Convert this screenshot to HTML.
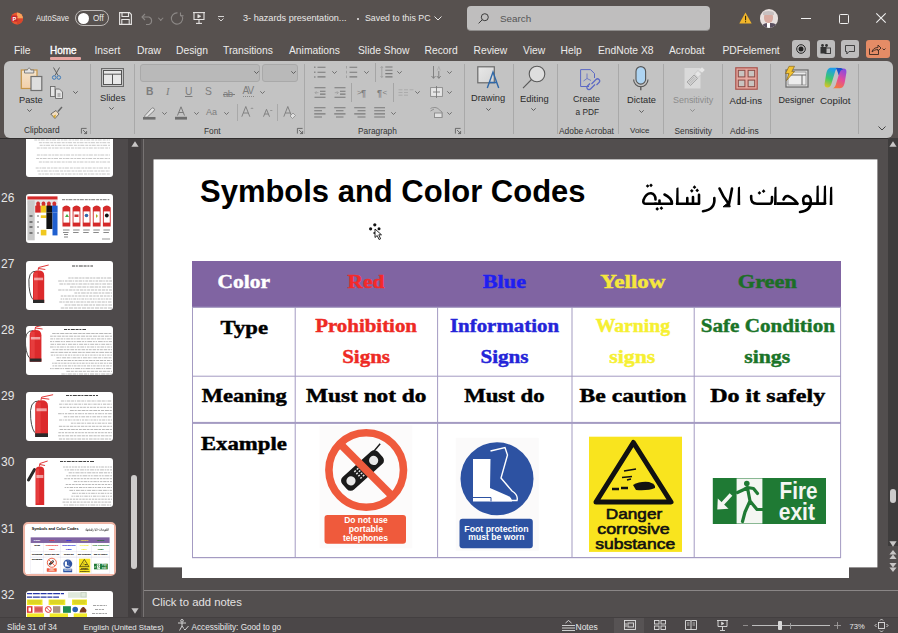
<!DOCTYPE html>
<html><head><meta charset="utf-8">
<style>
*{margin:0;padding:0;box-sizing:border-box}
html,body{width:898px;height:633px;overflow:hidden;background:#57514f;font-family:"Liberation Sans",sans-serif}
.a{position:absolute;white-space:nowrap;line-height:1}
svg{position:absolute;overflow:visible}
#titlebar{position:absolute;left:0;top:0;width:898px;height:61px;background:#57514f}
.tab{position:absolute;top:45.5px;font-size:10.3px;color:#ecebea;line-height:1;white-space:nowrap}
#ribbon{position:absolute;left:4px;top:61px;width:889px;height:77px;background:#c3c3c3;border-radius:6px}
.rl{position:absolute;white-space:nowrap;line-height:1;color:#2b2b2b;font-size:9px}
.gl{position:absolute;white-space:nowrap;line-height:1;color:#333;font-size:8.3px}
.sep{position:absolute;width:1px;background:#a9a9a9;top:64px;height:70px}
.chev{position:absolute;width:4px;height:4px;border-right:1px solid #555;border-bottom:1px solid #555;transform:rotate(45deg)}
#pane{position:absolute;left:0;top:138px;width:143px;height:479px;background:#4e4a4b}
#vscroll{position:absolute;left:128px;top:138px;width:12.5px;height:479px;background:#423e3f}
#vsep{position:absolute;left:143px;top:138px;width:1px;height:479px;background:#777373}
#main{position:absolute;left:144px;top:138px;width:754px;height:479px;background:#524e4e}
#status{position:absolute;left:0;top:617px;width:898px;height:16px;background:#4b4748;border-top:1px solid #433f40}
.thumb{position:absolute;left:25.8px;width:87.4px;height:49px;background:#fff;border-radius:3px;overflow:hidden}
.num{position:absolute;left:1px;color:#e6e6e6;font-size:12px;line-height:1}
.st{position:absolute;top:623.5px;font-size:8.2px;color:#e8e8e8;line-height:1;white-space:nowrap}
</style></head><body>
<div id="titlebar"></div>
<div id="pane"></div>
<div class="thumb" style="top:128px;height:49.4px"><svg width="88" height="50"><path d="M8.3 12.0 H84" stroke="#999" stroke-width="0.55" stroke-dasharray="3 0.8 2 0.6 4 1"/><path d="M12.9 14.7 H84" stroke="#999" stroke-width="0.55" stroke-dasharray="3 0.8 2 0.6 4 1"/><path d="M13.7 17.3 H84" stroke="#999" stroke-width="0.55" stroke-dasharray="3 0.8 2 0.6 4 1"/><path d="M10.8 20.0 H84" stroke="#999" stroke-width="0.55" stroke-dasharray="3 0.8 2 0.6 4 1"/><path d="M10.9 27.0 H84" stroke="#999" stroke-width="0.55" stroke-dasharray="3 0.8 2 0.6 4 1"/><path d="M10.2 30.5 H84" stroke="#999" stroke-width="0.55" stroke-dasharray="3 0.8 2 0.6 4 1"/><path d="M12.9 34.0 H84" stroke="#999" stroke-width="0.55" stroke-dasharray="3 0.8 2 0.6 4 1"/><path d="M9.7 40.0 H84" stroke="#999" stroke-width="0.55" stroke-dasharray="3 0.8 2 0.6 4 1"/><path d="M11.3 43.0 H84" stroke="#999" stroke-width="0.55" stroke-dasharray="3 0.8 2 0.6 4 1"/><path d="M12.4 46.0 H84" stroke="#999" stroke-width="0.55" stroke-dasharray="3 0.8 2 0.6 4 1"/></svg></div>
<div class="thumb" style="top:194.3px"><svg width="88" height="49"><rect x="1.4" y="2.4" width="30.1" height="3.3" fill="#d42a2a"/><rect x="1.4" y="5.7" width="30.1" height="5" fill="#e4e4e4"/><rect x="1.4" y="6.3" width="7.3" height="40" fill="#c8c8c8"/><rect x="10.3" y="7.6" width="3.6" height="7.2" rx="1.6" fill="#d03030"/><rect x="15.700000000000001" y="7.6" width="3.6" height="7.2" rx="1.6" fill="#d03030"/><rect x="21.1" y="7.6" width="3.6" height="7.2" rx="1.6" fill="#d03030"/><rect x="26.500000000000004" y="7.6" width="3.6" height="7.2" rx="1.6" fill="#d03030"/><rect x="9.2" y="11.6" width="5.6" height="7" fill="#d42a2a"/><rect x="14.799999999999999" y="11.6" width="5.6" height="7" fill="#f0c820"/><rect x="20.4" y="11.6" width="5.6" height="7" fill="#111"/><rect x="25.999999999999996" y="11.6" width="5.6" height="7" fill="#2060d0"/><rect x="14.8" y="21.3" width="5.6" height="2.7" fill="#f0c820"/><rect x="14.8" y="35.8" width="5.6" height="5.6" fill="#f0c820"/><rect x="20.4" y="18.6" width="6.1" height="16.4" fill="#111"/><rect x="26.5" y="18.6" width="5" height="22.8" fill="#2060d0"/><circle cx="12" cy="22" r="0.7" fill="#333"/><rect x="3.5" y="21" width="3" height="2" fill="#777"/><circle cx="12" cy="28" r="0.7" fill="#333"/><rect x="3.5" y="27" width="3" height="2" fill="#777"/><circle cx="12" cy="33" r="0.7" fill="#333"/><rect x="3.5" y="32" width="3" height="2" fill="#777"/><circle cx="12" cy="39" r="0.7" fill="#333"/><rect x="3.5" y="38" width="3" height="2" fill="#777"/><path d="M36.0 5.7 H83.3" stroke="#555" stroke-width="0.8" stroke-dasharray="3 0.8 2 0.6 4 1"/><path d="M36.5 13.5 Q40.4 9.5 44.3 13.5 V32.5 H36.5Z" fill="#d42a2a"/><rect x="37.4" y="17.4" width="6" height="11.2" fill="#fff"/><path d="M37.0 36 H43.5 M37.0 38.5 H42.5" stroke="#555" stroke-width="0.7"/><path d="M46.6 13.5 Q50.5 9.5 54.4 13.5 V32.5 H46.6Z" fill="#d42a2a"/><rect x="47.5" y="17.4" width="6" height="11.2" fill="#fff"/><path d="M47.1 36 H53.6 M47.1 38.5 H52.6" stroke="#555" stroke-width="0.7"/><path d="M56.7 13.5 Q60.6 9.5 64.5 13.5 V32.5 H56.7Z" fill="#d42a2a"/><rect x="57.6" y="17.4" width="6" height="11.2" fill="#fff"/><path d="M57.2 36 H63.7 M57.2 38.5 H62.7" stroke="#555" stroke-width="0.7"/><path d="M66.8 13.5 Q70.7 9.5 74.6 13.5 V32.5 H66.8Z" fill="#d42a2a"/><rect x="67.7" y="17.4" width="6" height="11.2" fill="#fff"/><path d="M67.3 36 H73.8 M67.3 38.5 H72.8" stroke="#555" stroke-width="0.7"/><path d="M76.9 13.5 Q80.80000000000001 9.5 84.7 13.5 V32.5 H76.9Z" fill="#d42a2a"/><rect x="77.80000000000001" y="17.4" width="6" height="11.2" fill="#fff"/><path d="M77.4 36 H83.9 M77.4 38.5 H82.9" stroke="#555" stroke-width="0.7"/><path d="M41 20 L43 23 H39Z" fill="#4a4"/><rect x="48.5" y="20.5" width="4" height="2.5" fill="#c33"/><circle cx="60.5" cy="21.5" r="1.8" fill="#36a"/><path d="M70 20 L72 22 L70 24Z" fill="#aa2"/><circle cx="80.8" cy="21.5" r="1.9" fill="#111"/><path d="M38 40.5 H42 M38 43 H42" stroke="#555" stroke-width="0.7"/><rect x="76" y="44" width="8" height="2" fill="#ccc"/></svg></div>
<div class="thumb" style="top:260.6px"><svg width="88" height="49"><path d="M10.36 10.15 Q1.4000000000000004 9.5 3.0800000000000005 25.75 Q4.2 37.125 8.12 39.400000000000006" stroke="#333" stroke-width="0.9" fill="none"/><path d="M7 14.54 Q7 9.5 12.6 9.5 Q18.2 9.5 18.2 14.54 V42 H7 Z" fill="#dc2a2c"/><rect x="7.896" y="11.45" width="3.9199999999999995" height="29.25" fill="#f05050" opacity="0.5"/><rect x="7" y="38.75" width="11.2" height="3.25" fill="#2a2a2a"/><path d="M12.04 9.5 L12.6 6.5 L22.68 4.0 M12.6 7.5 L19.32 8.5" stroke="#d22" stroke-width="0.9" fill="none"/><rect x="8.12" y="16.65" width="8.959999999999999" height="2.6" fill="#fff" opacity="0.55"/><path d="M46 5 H67" stroke="#444" stroke-width="1" stroke-dasharray="3 0.8 2 1 4 0.8"/><path d="M42.3 17.0 H86" stroke="#8a8a8a" stroke-width="0.6" stroke-dasharray="2.4 0.7 2.2 0.9 3.9 0.8"/><path d="M32.2 20.0 H86" stroke="#8a8a8a" stroke-width="0.6" stroke-dasharray="3.6 0.7 1.5 0.9 2.7 0.8"/><path d="M33.4 23.0 H86" stroke="#8a8a8a" stroke-width="0.6" stroke-dasharray="3.6 0.7 2.0 0.9 3.9 0.8"/><path d="M44.0 26.0 H86" stroke="#8a8a8a" stroke-width="0.6" stroke-dasharray="3.7 0.7 2.0 0.9 4.2 0.8"/><path d="M32.2 29.0 H86" stroke="#8a8a8a" stroke-width="0.6" stroke-dasharray="3.4 0.7 2.2 0.9 2.9 0.8"/><path d="M48.4 32.0 H86" stroke="#8a8a8a" stroke-width="0.6" stroke-dasharray="2.7 0.7 2.4 0.9 4.6 0.8"/><path d="M34.8 35.0 H86" stroke="#8a8a8a" stroke-width="0.6" stroke-dasharray="2.5 0.7 2.6 0.9 3.3 0.8"/><path d="M34.6 38.0 H86" stroke="#8a8a8a" stroke-width="0.6" stroke-dasharray="1.7 0.7 1.3 0.9 2.7 0.8"/><path d="M33.3 41.0 H86" stroke="#8a8a8a" stroke-width="0.6" stroke-dasharray="3.1 0.7 1.6 0.9 3.5 0.8"/><path d="M38.6 44.0 H86" stroke="#8a8a8a" stroke-width="0.6" stroke-dasharray="3.0 0.7 2.2 0.9 4.7 0.8"/><path d="M34.8 47.0 H86" stroke="#8a8a8a" stroke-width="0.6" stroke-dasharray="3.6 0.7 3.0 0.9 4.0 0.8"/></svg></div>
<div class="thumb" style="top:326.1px"><svg width="88" height="49"><path d="M7.21 4.634 Q-2.1499999999999995 4 -0.3949999999999996 19.85 Q0.7750000000000004 30.945 4.87 33.164" stroke="#333" stroke-width="0.9" fill="none"/><path d="M3.7 9.265 Q3.7 4 9.55 4 Q15.4 4 15.4 9.265 V35.7 H3.7 Z" fill="#dc2a2c"/><rect x="4.636" y="5.902" width="4.095" height="28.530000000000005" fill="#f05050" opacity="0.5"/><rect x="3.7" y="32.53" width="11.7" height="3.1700000000000004" fill="#2a2a2a"/><path d="M8.965 4 L9.55 1 L20.08 -1.5 M9.55 2 L16.57 3" stroke="#d22" stroke-width="0.9" fill="none"/><rect x="4.87" y="10.974" width="9.36" height="2.5360000000000005" fill="#fff" opacity="0.55"/><path d="M38 3.5 H60" stroke="#444" stroke-width="1" stroke-dasharray="3 0.8 2 1 4 0.8"/><path d="M26.2 7.5 H86" stroke="#8a8a8a" stroke-width="0.6" stroke-dasharray="3.5 0.7 2.9 0.9 4.2 0.8"/><path d="M24.1 10.2 H86" stroke="#8a8a8a" stroke-width="0.6" stroke-dasharray="2.7 0.7 2.9 0.9 3.9 0.8"/><path d="M24.3 12.9 H86" stroke="#8a8a8a" stroke-width="0.6" stroke-dasharray="2.7 0.7 1.5 0.9 3.6 0.8"/><path d="M24.0 15.6 H86" stroke="#8a8a8a" stroke-width="0.6" stroke-dasharray="2.0 0.7 1.6 0.9 4.7 0.8"/><path d="M24.5 18.3 H86" stroke="#8a8a8a" stroke-width="0.6" stroke-dasharray="3.5 0.7 1.3 0.9 3.9 0.8"/><path d="M24.0 21.0 H86" stroke="#8a8a8a" stroke-width="0.6" stroke-dasharray="3.7 0.7 1.4 0.9 2.6 0.8"/><path d="M26.6 23.7 H86" stroke="#8a8a8a" stroke-width="0.6" stroke-dasharray="2.2 0.7 2.9 0.9 3.6 0.8"/><path d="M24.6 26.4 H86" stroke="#8a8a8a" stroke-width="0.6" stroke-dasharray="3.9 0.7 2.4 0.9 4.9 0.8"/><path d="M24.9 29.1 H86" stroke="#8a8a8a" stroke-width="0.6" stroke-dasharray="2.4 0.7 1.3 0.9 2.4 0.8"/><path d="M30.5 31.8 H86" stroke="#8a8a8a" stroke-width="0.6" stroke-dasharray="3.0 0.7 1.0 0.9 4.0 0.8"/><path d="M30.7 34.5 H86" stroke="#8a8a8a" stroke-width="0.6" stroke-dasharray="3.5 0.7 2.0 0.9 2.9 0.8"/><path d="M26.1 37.2 H86" stroke="#8a8a8a" stroke-width="0.6" stroke-dasharray="1.6 0.7 3.0 0.9 2.1 0.8"/><path d="M26.5 39.9 H86" stroke="#8a8a8a" stroke-width="0.6" stroke-dasharray="1.5 0.7 2.6 0.9 3.1 0.8"/><path d="M24.0 42.6 H86" stroke="#8a8a8a" stroke-width="0.6" stroke-dasharray="1.6 0.7 1.4 0.9 4.9 0.8"/><path d="M40.4 45.3 H86" stroke="#8a8a8a" stroke-width="0.6" stroke-dasharray="3.8 0.7 2.9 0.9 3.0 0.8"/><path d="M35.4 48.0 H86" stroke="#8a8a8a" stroke-width="0.6" stroke-dasharray="3.4 0.7 1.2 0.9 4.2 0.8"/></svg></div>
<div class="thumb" style="top:392.4px"><svg width="88" height="49"><path d="M13.04 8.936 Q2.799999999999999 8.2 4.72 26.599999999999998 Q5.999999999999999 39.48 10.48 42.056" stroke="#333" stroke-width="0.9" fill="none"/><path d="M9.2 13.96 Q9.2 8.2 15.6 8.2 Q22 8.2 22 13.96 V45 H9.2 Z" fill="#dc2a2c"/><rect x="10.224" y="10.408" width="4.4799999999999995" height="33.12" fill="#f05050" opacity="0.5"/><rect x="9.2" y="41.32" width="12.8" height="3.6799999999999997" fill="#2a2a2a"/><path d="M14.96 8.2 L15.6 5.199999999999999 L27.119999999999997 2.6999999999999993 M15.6 6.199999999999999 L23.28 7.199999999999999" stroke="#d22" stroke-width="0.9" fill="none"/><rect x="10.48" y="16.296" width="10.240000000000002" height="2.944" fill="#fff" opacity="0.55"/><path d="M40 3.5 H72" stroke="#444" stroke-width="1" stroke-dasharray="3 0.8 2 1 4 0.8"/><path d="M34.9 9.0 H86" stroke="#8a8a8a" stroke-width="0.6" stroke-dasharray="3.1 0.7 1.1 0.9 3.6 0.8"/><path d="M33.1 12.2 H86" stroke="#8a8a8a" stroke-width="0.6" stroke-dasharray="2.8 0.7 1.1 0.9 3.3 0.8"/><path d="M33.7 15.3 H86" stroke="#8a8a8a" stroke-width="0.6" stroke-dasharray="2.6 0.7 2.7 0.9 2.4 0.8"/><path d="M43.9 18.5 H86" stroke="#8a8a8a" stroke-width="0.6" stroke-dasharray="3.9 0.7 2.2 0.9 3.2 0.8"/><path d="M32.1 21.7 H86" stroke="#8a8a8a" stroke-width="0.6" stroke-dasharray="3.6 0.7 1.6 0.9 2.4 0.8"/><path d="M37.8 24.8 H86" stroke="#8a8a8a" stroke-width="0.6" stroke-dasharray="3.5 0.7 1.4 0.9 3.7 0.8"/><path d="M33.1 28.0 H86" stroke="#8a8a8a" stroke-width="0.6" stroke-dasharray="2.9 0.7 1.1 0.9 2.2 0.8"/><path d="M44.9 31.2 H86" stroke="#8a8a8a" stroke-width="0.6" stroke-dasharray="2.6 0.7 1.6 0.9 3.8 0.8"/><path d="M32.9 34.3 H86" stroke="#8a8a8a" stroke-width="0.6" stroke-dasharray="3.5 0.7 2.4 0.9 2.7 0.8"/><path d="M33.6 37.5 H86" stroke="#8a8a8a" stroke-width="0.6" stroke-dasharray="3.7 0.7 2.5 0.9 2.9 0.8"/><path d="M32.4 40.7 H86" stroke="#8a8a8a" stroke-width="0.6" stroke-dasharray="2.5 0.7 2.5 0.9 2.5 0.8"/><path d="M32.1 43.8 H86" stroke="#8a8a8a" stroke-width="0.6" stroke-dasharray="3.2 0.7 2.5 0.9 3.7 0.8"/><path d="M32.9 47.0 H86" stroke="#8a8a8a" stroke-width="0.6" stroke-dasharray="3.2 0.7 2.2 0.9 3.7 0.8"/></svg></div>
<div class="thumb" style="top:458.3px"><svg width="88" height="49"><path d="M8.5 11.58 L2.5 21.975" stroke="#2a2a2a" stroke-width="3" stroke-linecap="round"/><path d="M9.5 12.415 Q9.5 8.5 13.85 8.5 Q18.2 8.5 18.2 12.415 V47 H9.5 Z" fill="#dc2a2c"/><rect x="10.196" y="10.81" width="3.0449999999999995" height="34.65" fill="#f05050" opacity="0.5"/><path d="M13.415 8.5 L13.85 5.5 L21.68 3.0 M13.85 6.5 L19.07 7.5" stroke="#d22" stroke-width="0.9" fill="none"/><rect x="10.37" y="16.97" width="6.96" height="3.08" fill="#fff" opacity="0.55"/><path d="M34 3.5 H68" stroke="#444" stroke-width="1" stroke-dasharray="3 0.8 2 1 4 0.8"/><path d="M37.1 9.0 H86" stroke="#8a8a8a" stroke-width="0.6" stroke-dasharray="1.8 0.7 2.7 0.9 2.0 0.8"/><path d="M38.7 11.9 H86" stroke="#8a8a8a" stroke-width="0.6" stroke-dasharray="1.7 0.7 2.1 0.9 3.8 0.8"/><path d="M42.6 14.8 H86" stroke="#8a8a8a" stroke-width="0.6" stroke-dasharray="3.3 0.7 1.9 0.9 4.2 0.8"/><path d="M40.2 17.8 H86" stroke="#8a8a8a" stroke-width="0.6" stroke-dasharray="1.8 0.7 2.0 0.9 4.8 0.8"/><path d="M38.3 20.7 H86" stroke="#8a8a8a" stroke-width="0.6" stroke-dasharray="2.5 0.7 2.5 0.9 2.3 0.8"/><path d="M47.8 23.6 H86" stroke="#8a8a8a" stroke-width="0.6" stroke-dasharray="3.3 0.7 1.8 0.9 2.3 0.8"/><path d="M39.7 26.5 H86" stroke="#8a8a8a" stroke-width="0.6" stroke-dasharray="2.2 0.7 2.6 0.9 2.6 0.8"/><path d="M38.6 29.5 H86" stroke="#8a8a8a" stroke-width="0.6" stroke-dasharray="1.6 0.7 1.8 0.9 3.5 0.8"/><path d="M43.4 32.4 H86" stroke="#8a8a8a" stroke-width="0.6" stroke-dasharray="3.8 0.7 1.2 0.9 3.8 0.8"/><path d="M46.1 35.3 H86" stroke="#8a8a8a" stroke-width="0.6" stroke-dasharray="3.7 0.7 1.4 0.9 2.0 0.8"/><path d="M45.4 38.2 H86" stroke="#8a8a8a" stroke-width="0.6" stroke-dasharray="1.5 0.7 1.2 0.9 3.5 0.8"/><path d="M37.3 41.2 H86" stroke="#8a8a8a" stroke-width="0.6" stroke-dasharray="2.5 0.7 2.3 0.9 2.3 0.8"/><path d="M36.5 44.1 H86" stroke="#8a8a8a" stroke-width="0.6" stroke-dasharray="3.0 0.7 2.9 0.9 2.2 0.8"/><path d="M37.8 47.0 H86" stroke="#8a8a8a" stroke-width="0.6" stroke-dasharray="1.9 0.7 1.5 0.9 5.0 0.8"/></svg></div>
<div class="thumb" style="top:591px"><svg width="88" height="49"><rect x="42" y="1.2" width="19" height="5.6" fill="#e0eadc"/><rect x="55" y="1.5" width="5" height="4.5" fill="none" stroke="#bcc8b8" stroke-width="0.6"/><path d="M1 2.6 H38 M1 6.1 H33" stroke="#2838a8" stroke-width="1.3" stroke-dasharray="5 0.8 7 0.8 6 0.8"/><rect x="0.9" y="8.5" width="15.6" height="5.5" fill="#f2ea28"/><path d="M1.9 10 H15.5 M2.4 12 H15.0" stroke="#8a8020" stroke-width="0.4"/><rect x="22.6" y="8.5" width="16.699999999999996" height="5.5" fill="#f2ea28"/><path d="M23.6 10 H38.3 M24.1 12 H37.8" stroke="#8a8020" stroke-width="0.4"/><rect x="46" y="8.5" width="15" height="5.5" fill="#f2ea28"/><path d="M47 10 H60 M47.5 12 H59.5" stroke="#8a8020" stroke-width="0.4"/><rect x="0.9" y="15.2" width="5.6" height="6.6" fill="#d33"/><rect x="2.5" y="16.5" width="2.5" height="4" fill="#fff"/><rect x="8.1" y="15.2" width="8.9" height="6.6" fill="#e88"/><rect x="9" y="16.3" width="7" height="4.4" fill="#c44" opacity="0.7"/><circle cx="22.3" cy="18.5" r="2.9" fill="none" stroke="#d33" stroke-width="1"/><path d="M20.3 16.5 L24.3 20.5" stroke="#d33" stroke-width="0.8"/><rect x="27" y="15.2" width="7.3" height="6.6" fill="#a89080"/><rect x="37" y="15.2" width="7.9" height="6.6" fill="#1f8a50"/><circle cx="49.2" cy="18.5" r="2.8" fill="#2a60b0"/><path d="M53.5 21.5 Q55 15.5 58 16 L60.5 19 L60 21.5Z" fill="#7a3a20"/><rect x="0.9" y="22.4" width="17.200000000000003" height="3.9" fill="#f2ea28"/><rect x="23.7" y="22.4" width="18.3" height="3.9" fill="#f2ea28"/><rect x="47.7" y="22.4" width="13.299999999999997" height="3.9" fill="#f2ea28"/><path d="M67 14.5 H81 M69 18.5 H78 M66 22.5 H81" stroke="#666" stroke-width="0.6" stroke-dasharray="3 0.8 2 0.8"/></svg></div>
<div style="position:absolute;left:23px;top:522px;width:92.7px;height:54.2px;border:2.2px solid #eeb4a4;border-radius:5px;background:#fff"></div>
<svg style="left:25.8px;top:524.6px;overflow:hidden" width="88" height="49.4"><use href="#slideg" transform="scale(0.1216) translate(-153.5 -159.4)"/></svg>
<div class="num" style="top:191.5px">26</div>
<div class="num" style="top:258px">27</div>
<div class="num" style="top:323.5px">28</div>
<div class="num" style="top:390px">29</div>
<div class="num" style="top:456px">30</div>
<div class="num" style="top:522.5px">31</div>
<div class="num" style="top:588.5px">32</div>
<div id="vscroll"></div>
<svg style="left:130.5px;top:141px" width="8" height="6" viewBox="0 0 8 6"><path d="M4 0.3 L7.6 5.7 H0.4Z" fill="#c8c6c6"/></svg>
<svg style="left:130.5px;top:607.5px" width="8" height="6" viewBox="0 0 8 6"><path d="M4 5.7 L7.6 0.3 H0.4Z" fill="#c8c6c6"/></svg>
<div style="position:absolute;left:131px;top:475px;width:6px;height:94px;border-radius:3px;background:#cdcbcb"></div>
<div id="vsep"></div>
<div id="main"></div>
<div style="position:absolute;left:0;top:138px;width:898px;height:1.2px;background:#2f2d2d"></div>
<div style="position:absolute;left:182px;top:567px;width:667px;height:11px;background:#fff"></div>
<svg style="left:0;top:0" width="898" height="633"><defs><g id="slideg"><rect x="153.5" y="159.4" width="723.9" height="408" fill="#fff"/>
<text x="200" y="202.4" font-size="31.5" fill="#000" stroke="#000" font-family="Liberation Sans" font-weight="bold" textLength="385.5" lengthAdjust="spacingAndGlyphs"  stroke-width="0">Symbols and Color Codes</text>
<rect x="192" y="261" width="649" height="46.5" fill="#8064a2"/>
<rect x="192.0" y="307" width="1" height="251" fill="#a49bc2"/>
<rect x="294.7" y="307" width="1" height="251" fill="#a49bc2"/>
<rect x="437.1" y="307" width="1" height="251" fill="#a49bc2"/>
<rect x="571.5" y="307" width="1" height="251" fill="#a49bc2"/>
<rect x="693.7" y="307" width="1" height="251" fill="#a49bc2"/>
<rect x="840.1" y="307" width="1" height="251" fill="#a49bc2"/>
<rect x="192" y="306.7" width="649" height="1" fill="#a49bc2"/>
<rect x="192" y="375.7" width="649" height="1" fill="#a49bc2"/>
<rect x="192" y="421.9" width="649" height="2" fill="#a49bc2"/>
<rect x="192" y="557.0" width="649" height="1.2" fill="#a49bc2"/>
<text x="217.5" y="287.6" font-size="19.3" fill="#fff" stroke="#fff" font-family="Liberation Serif" font-weight="bold" stroke-width="0.45" textLength="52.5" lengthAdjust="spacingAndGlyphs" >Color</text>
<text x="347.5" y="287.6" font-size="19.3" fill="#f42a2a" stroke="#f42a2a" font-family="Liberation Serif" font-weight="bold" stroke-width="0.45" textLength="37.0" lengthAdjust="spacingAndGlyphs" >Red</text>
<text x="482.8" y="287.6" font-size="19.3" fill="#1f1ff0" stroke="#1f1ff0" font-family="Liberation Serif" font-weight="bold" stroke-width="0.45" textLength="43.2" lengthAdjust="spacingAndGlyphs" >Blue</text>
<text x="600.2" y="287.6" font-size="19.3" fill="#f6e83c" stroke="#f6e83c" font-family="Liberation Serif" font-weight="bold" stroke-width="0.45" textLength="65.3" lengthAdjust="spacingAndGlyphs" >Yellow</text>
<text x="737.8" y="287.6" font-size="19.3" fill="#1c6e26" stroke="#1c6e26" font-family="Liberation Serif" font-weight="bold" stroke-width="0.45" textLength="59.0" lengthAdjust="spacingAndGlyphs" >Green</text>
<text x="220.6" y="334.2" font-size="19.3" fill="#000" stroke="#000" font-family="Liberation Serif" font-weight="bold" stroke-width="0.45" textLength="47.4" lengthAdjust="spacingAndGlyphs" >Type</text>
<text x="315.2" y="332.3" font-size="19.3" fill="#ee2a24" stroke="#ee2a24" font-family="Liberation Serif" font-weight="bold" stroke-width="0.45" textLength="101.8" lengthAdjust="spacingAndGlyphs" >Prohibition</text>
<text x="342.2" y="363.3" font-size="19.3" fill="#ee2a24" stroke="#ee2a24" font-family="Liberation Serif" font-weight="bold" stroke-width="0.45" textLength="47.8" lengthAdjust="spacingAndGlyphs" >Signs</text>
<text x="450" y="332.3" font-size="19.3" fill="#2424d8" stroke="#2424d8" font-family="Liberation Serif" font-weight="bold" stroke-width="0.45" textLength="109" lengthAdjust="spacingAndGlyphs" >Information</text>
<text x="480.4" y="363.3" font-size="19.3" fill="#2424d8" stroke="#2424d8" font-family="Liberation Serif" font-weight="bold" stroke-width="0.45" textLength="48.2" lengthAdjust="spacingAndGlyphs" >Signs</text>
<text x="595.7" y="332.3" font-size="19.3" fill="#f6f032" stroke="#f6f032" font-family="Liberation Serif" font-weight="bold" stroke-width="0.45" textLength="74.3" lengthAdjust="spacingAndGlyphs" >Warning</text>
<text x="609.2" y="363.3" font-size="19.3" fill="#f6f032" stroke="#f6f032" font-family="Liberation Serif" font-weight="bold" stroke-width="0.45" textLength="46.1" lengthAdjust="spacingAndGlyphs" >signs</text>
<text x="700.7" y="332.3" font-size="19.3" fill="#1a7428" stroke="#1a7428" font-family="Liberation Serif" font-weight="bold" stroke-width="0.45" textLength="134.3" lengthAdjust="spacingAndGlyphs" >Safe Condition</text>
<text x="744.2" y="363.3" font-size="19.3" fill="#1a7428" stroke="#1a7428" font-family="Liberation Serif" font-weight="bold" stroke-width="0.45" textLength="46.0" lengthAdjust="spacingAndGlyphs" >sings</text>
<text x="201.8" y="402.3" font-size="19.3" fill="#000" stroke="#000" font-family="Liberation Serif" font-weight="bold" stroke-width="0.45" textLength="85.0" lengthAdjust="spacingAndGlyphs" >Meaning</text>
<text x="306" y="402.3" font-size="19.3" fill="#000" stroke="#000" font-family="Liberation Serif" font-weight="bold" stroke-width="0.45" textLength="120.5" lengthAdjust="spacingAndGlyphs" >Must not do</text>
<text x="464.2" y="402.3" font-size="19.3" fill="#000" stroke="#000" font-family="Liberation Serif" font-weight="bold" stroke-width="0.45" textLength="80.4" lengthAdjust="spacingAndGlyphs" >Must do</text>
<text x="579.6" y="402.3" font-size="19.3" fill="#000" stroke="#000" font-family="Liberation Serif" font-weight="bold" stroke-width="0.45" textLength="106.8" lengthAdjust="spacingAndGlyphs" >Be caution</text>
<text x="710.2" y="402.3" font-size="19.3" fill="#000" stroke="#000" font-family="Liberation Serif" font-weight="bold" stroke-width="0.45" textLength="115.0" lengthAdjust="spacingAndGlyphs" >Do it safely</text>
<text x="200.9" y="449.9" font-size="19.3" fill="#000" stroke="#000" font-family="Liberation Serif" font-weight="bold" stroke-width="0.45" textLength="85.9" lengthAdjust="spacingAndGlyphs" >Example</text>
<rect x="319.6" y="425.3" width="92.7" height="123" fill="#fcfbfb"/>
<g transform="translate(362.5 470.5) rotate(-42)"><rect x="-24" y="-8.5" width="48" height="17" rx="5" fill="#1a1a1a"/><circle cx="-15.5" cy="0" r="4.6" fill="#e8e8e8"/><circle cx="15" cy="0" r="4.6" fill="#e8e8e8"/><path d="M-7 -4.5 H6 M-7 -1.5 H6 M-7 1.5 H6 M-7 4.5 H6" stroke="#e8e8e8" stroke-width="1.5" stroke-dasharray="2 1.4"/><path d="M20 -6.5 L31 -8" stroke="#1a1a1a" stroke-width="1.4"/></g>
<circle cx="366.2" cy="470" r="37.3" fill="none" stroke="#ef5a3c" stroke-width="7.6"/>
<path d="M340 443.8 L392.4 496.2" stroke="#ef5a3c" stroke-width="7.6"/>
<rect x="324.5" y="514.9" width="81.5" height="28.8" rx="3" fill="#ef5a3c"/>
<text x="344.2" y="523.2" font-size="9" fill="#fff" stroke="#fff" font-family="Liberation Sans" font-weight="bold" textLength="43.6" lengthAdjust="spacingAndGlyphs"  stroke-width="0">Do not use</text>
<text x="348.8" y="532.2" font-size="9" fill="#fff" stroke="#fff" font-family="Liberation Sans" font-weight="bold" textLength="34.2" lengthAdjust="spacingAndGlyphs"  stroke-width="0">portable</text>
<text x="343" y="541.2" font-size="9" fill="#fff" stroke="#fff" font-family="Liberation Sans" font-weight="bold" textLength="45" lengthAdjust="spacingAndGlyphs"  stroke-width="0">telephones</text>
<rect x="455.7" y="437.8" width="83.1" height="113" fill="#fbfafa"/>
<circle cx="497" cy="478.8" r="36.5" fill="#2d52a2"/>
<path d="M490.5 451 L505 447.5 L507.5 455 L501 478 L512 491 Q518.5 495 517 500.5 L490 500.5 L486 498" fill="none" stroke="#fff" stroke-width="1.4"/>
<path d="M473 459 L490.5 459 L490 488 L506 495 Q512 497 512 501.5 L473 501.5 Z" fill="#fff"/>
<path d="M473 497.5 H491 V501.5" fill="none" stroke="#2d52a2" stroke-width="1"/>
<rect x="459.5" y="518.8" width="73.3" height="29.4" rx="3" fill="#2d52a2"/>
<text x="464.3" y="532" font-size="9" fill="#fff" stroke="#fff" font-family="Liberation Sans" font-weight="bold" textLength="64.2" lengthAdjust="spacingAndGlyphs"  stroke-width="0">Foot protection</text>
<text x="468.2" y="540.4" font-size="9" fill="#fff" stroke="#fff" font-family="Liberation Sans" font-weight="bold" textLength="56.3" lengthAdjust="spacingAndGlyphs"  stroke-width="0">must be worn</text>
<rect x="589" y="436.7" width="93" height="115.2" fill="#f9e41e"/>
<path d="M633.4 442.5 L671 502 L596 502 Z" fill="none" stroke="#111" stroke-width="5" stroke-linejoin="round"/>
<path d="M612 489 H619 M621 488 H628" stroke="#111" stroke-width="2.4"/>
<path d="M633 485 Q640 481 649 482 Q656 484 655 488 Q648 491 636 490 Z" fill="#111"/>
<path d="M624 471 L636 469 M622 477.5 L632 476.5 M627 480 L631 479" stroke="#111" stroke-width="1.6"/>
<text x="605.8" y="518.8" font-size="15" fill="#111" stroke="#111" font-family="Liberation Sans" textLength="56.4" lengthAdjust="spacingAndGlyphs" stroke-width="0.6">Danger</text>
<text x="597.2" y="533.5" font-size="15" fill="#111" stroke="#111" font-family="Liberation Sans" textLength="72.6" lengthAdjust="spacingAndGlyphs" stroke-width="0.6">corrosive</text>
<text x="595.2" y="548.6" font-size="15" fill="#111" stroke="#111" font-family="Liberation Sans" textLength="80.0" lengthAdjust="spacingAndGlyphs" stroke-width="0.6">substance</text>
<rect x="712.8" y="478" width="113.2" height="46" fill="#1f7a34"/>
<rect x="736.6" y="478.5" width="25.8" height="45" fill="#f4f6f2"/>
<path d="M719.5 507 L731 494.5" stroke="#f4f6f2" stroke-width="3.6" fill="none"/>
<path d="M717.3 509.5 L717.8 498.5 L728.5 508.8 Z" fill="#f4f6f2"/>
<circle cx="746.8" cy="483.5" r="2.8" fill="#1f7a34"/>
<path d="M737.5 492.5 L744 489.5 L747.5 487.5 L753.5 488.5 L757.5 493.5 M747.5 488 L750 501 L757 509.5 L763.5 509.5 M750 501 L745 512 L742.5 521.5" stroke="#1f7a34" stroke-width="3.2" fill="none" stroke-linejoin="round" stroke-linecap="round"/>
<text x="779.5" y="499.2" font-size="23.5" fill="#f4f6f2" stroke="#f4f6f2" font-family="Liberation Sans" font-weight="bold" textLength="38.0" lengthAdjust="spacingAndGlyphs"  stroke-width="0">Fire</text>
<text x="778.7" y="520.2" font-size="23.5" fill="#f4f6f2" stroke="#f4f6f2" font-family="Liberation Sans" font-weight="bold" textLength="36.3" lengthAdjust="spacingAndGlyphs"  stroke-width="0">exit</text>
<path d="M830.1 187.8 Q831 186.3 832.2 186.8 L832.4 205 L829.7 205 Z" fill="#000"/>
<path d="M823.9 186.5 Q824.8 185.0 826.0 185.5 L826.1999999999999 204 L823.5 204 Z" fill="#000"/>
<path d="M816.6 186.5 Q817.5 185.0 818.7 185.5 L818.9 204 L816.2 204 Z" fill="#000"/>
<path d="M825 203.6 H804" stroke="#000" fill="none" stroke-width="2.6" stroke-linecap="round" stroke-linejoin="round"/>
<path d="M804 203.8 Q801.5 197 806.5 195.8 Q811 196 810.8 202 Q811 210.5 800 212" stroke="#000" fill="none" stroke-width="2.6" stroke-linecap="round" stroke-linejoin="round"/>
<path d="M797.6 203.8 Q793 197.5 788 196 Q785 195.5 783.5 199.5" stroke="#000" fill="none" stroke-width="2.6" stroke-linecap="round" stroke-linejoin="round"/>
<path d="M797.6 203.6 H776.5" stroke="#000" stroke-width="2.8"/>
<path d="M774.4 187.8 Q775.3 186.3 776.5 186.8 L776.6999999999999 205 L774.0 205 Z" fill="#000"/>
<path d="M751.2 196 Q750.5 203.8 757 203.8 H770 Q772.3 203.8 772 197" stroke="#000" fill="none" stroke-width="2.6" stroke-linecap="round" stroke-linejoin="round"/>
<rect x="758.1" y="191.6" width="2.6" height="2.6" fill="#000" transform="rotate(45 759.4 192.9)"/>
<rect x="762.3000000000001" y="189.89999999999998" width="2.6" height="2.6" fill="#000" transform="rotate(45 763.6 191.2)"/>
<path d="M737.9 187.8 Q738.8 186.3 740.0 186.8 L740.1999999999999 205 L737.5 205 Z" fill="#000"/>
<path d="M719.5 188.5 Q723 197 728.8 204 M732 188.5 Q730.5 197 729 204" stroke="#000" fill="none" stroke-width="2.6" stroke-linecap="round" stroke-linejoin="round"/>
<path d="M723 206.8 L729 202 L730.2 206.8 Z" fill="#000" stroke="#000" stroke-width="1"/>
<path d="M714.3 198 Q715.5 209.5 703 211.3" stroke="#000" fill="none" stroke-width="2.6" stroke-linecap="round" stroke-linejoin="round"/>
<path d="M699 194.8 V203.8 H677 M693 197 V203.8 M687.3 198 V203.8" stroke="#000" fill="none" stroke-width="2.6" stroke-linecap="round" stroke-linejoin="round"/>
<rect x="693.2" y="185.89999999999998" width="2.6" height="2.6" fill="#000" transform="rotate(45 694.5 187.2)"/>
<rect x="690.5" y="189.5" width="2.6" height="2.6" fill="#000" transform="rotate(45 691.8 190.8)"/>
<rect x="695.9000000000001" y="189.1" width="2.6" height="2.6" fill="#000" transform="rotate(45 697.2 190.4)"/>
<path d="M676.4 188.6 Q677.3 187.1 678.5 187.6 L678.6999999999999 204.4 L676.0 204.4 Z" fill="#000"/>
<path d="M664.5 194.5 Q672 198 672 203.8 H655" stroke="#000" fill="none" stroke-width="2.6" stroke-linecap="round" stroke-linejoin="round"/>
<path d="M659.5 203.8 V200.5" stroke="#000" fill="none" stroke-width="2.6" stroke-linecap="round" stroke-linejoin="round"/>
<rect x="655.9000000000001" y="207.6" width="2.6" height="2.6" fill="#000" transform="rotate(45 657.2 208.9)"/>
<rect x="660.1" y="206.89999999999998" width="2.6" height="2.6" fill="#000" transform="rotate(45 661.4 208.2)"/>
<path d="M656 203.8 H646 Q642.5 203.8 643.5 200 Q646 193 651 193.2 Q655.5 194 655.5 199.5" stroke="#000" fill="none" stroke-width="2.6" stroke-linecap="round" stroke-linejoin="round"/>
<rect x="646.3000000000001" y="184.7" width="2.6" height="2.6" fill="#000" transform="rotate(45 647.6 186)"/>
<rect x="649.7" y="184.0" width="2.6" height="2.6" fill="#000" transform="rotate(45 651 185.3)"/></g></defs><use href="#slideg"/></svg>
<svg style="left:362px;top:215px" width="30" height="30" viewBox="0 0 30 30"><circle cx="12.8" cy="9.8" r="1.6" fill="#111"/><circle cx="8.6" cy="13.8" r="1.6" fill="#111"/><circle cx="17" cy="13.8" r="1.5" fill="#111"/><circle cx="12.3" cy="18" r="1.1" fill="#333"/><path d="M13 14 V22.5 L15.2 20.5 L17 24.5 L18.6 23.8 L16.8 19.8 H19.5 Z" fill="#fff" stroke="#111" stroke-width="0.9" stroke-linejoin="round"/></svg>
<div style="position:absolute;left:887.5px;top:138px;width:10.5px;height:408px;background:#3e3c3c"></div>
<svg style="left:889px;top:141px" width="8" height="6" viewBox="0 0 8 6"><path d="M4 0.3 L7.6 5.7 H0.4Z" fill="#c8c6c6"/></svg>
<svg style="left:889px;top:540.5px" width="8" height="6" viewBox="0 0 8 6"><path d="M4 5.7 L7.6 0.3 H0.4Z" fill="#c8c6c6"/></svg>
<div style="position:absolute;left:889.5px;top:488.5px;width:6px;height:14px;border-radius:3px;background:#cdcbcb"></div>
<svg style="left:889px;top:550px" width="8" height="10" viewBox="0 0 8 10"><path d="M4 0 L7.6 4.5 H0.4Z M4 4.5 L7.6 9 H0.4Z" fill="#c8c6c6"/></svg>
<svg style="left:889px;top:563px" width="8" height="10" viewBox="0 0 8 10"><path d="M4 4.5 L7.6 0 H0.4Z M4 9 L7.6 4.5 H0.4Z" fill="#c8c6c6"/></svg>
<div style="position:absolute;left:144px;top:589.5px;width:754px;height:1px;background:#8a8686"></div>
<div class="a" style="left:152px;top:597px;font-size:11.3px;color:#e4e2e2">Click to add notes</div>
<div id="status"></div>
<div class="st" style="left:7px">Slide 31 of 34</div>
<div class="st" style="left:83.5px;font-size:7.85px">English (United States)</div>
<svg style="left:177px;top:619px" width="12" height="12" viewBox="0 0 12 12" fill="none" stroke="#e0e0e0" stroke-width="0.9"><circle cx="5" cy="1.8" r="1.3"/><path d="M1 4 H9 M5 4 V7 L2.5 11.5 M5 7 L6.5 9"/><path d="M6.5 9.5 L8 11 L11.5 7"/></svg>
<div class="st" style="left:191.5px">Accessibility: Good to go</div>
<svg style="left:562px;top:619.5px" width="13" height="11" viewBox="0 0 13 11" fill="none" stroke="#e0e0e0" stroke-width="0.9"><path d="M3.5 3 L6.5 0.5 L9.5 3"/><path d="M0 5.5 H13 M0 8 H13 M0 10.5 H13"/></svg>
<div class="st" style="left:575.5px;top:622.5px;font-size:8.5px">Notes</div>
<div style="position:absolute;left:613.5px;top:618px;width:30.5px;height:15px;background:#575354"></div>
<svg style="left:623.5px;top:620px" width="12" height="10" viewBox="0 0 12 10" fill="none" stroke="#e0e0e0" stroke-width="0.9"><rect x="0.5" y="0.5" width="11" height="9"/><rect x="4" y="3" width="5.5" height="4"/><path d="M2 3 V7"/></svg>
<svg style="left:654px;top:620px" width="12" height="10" viewBox="0 0 12 10" fill="none" stroke="#e0e0e0" stroke-width="0.9"><rect x="0.5" y="0.5" width="4.5" height="3.5"/><rect x="7" y="0.5" width="4.5" height="3.5"/><rect x="0.5" y="6" width="4.5" height="3.5"/><rect x="7" y="6" width="4.5" height="3.5"/></svg>
<svg style="left:685px;top:620px" width="12" height="10" viewBox="0 0 12 10" fill="none" stroke="#e0e0e0" stroke-width="0.9"><path d="M0.5 0.5 H5.5 L6 1.5 L6.5 0.5 H11.5 V9.5 H0.5Z M6 1.5 V9.5"/><path d="M2 3 H4.5 M2 5 H4.5 M7.5 3 H10 M7.5 5 H10" stroke-width="0.7"/></svg>
<svg style="left:716.5px;top:620px" width="11" height="11" viewBox="0 0 11 11" fill="none" stroke="#e0e0e0" stroke-width="0.9"><path d="M0 0.5 H11 M1 0.5 V6.5 H10 V0.5 M5.5 6.5 V10.5 M3 10.5 H8"/><path d="M4.5 2 L7 3.5 L4.5 5Z" fill="#e0e0e0" stroke-width="0.5"/></svg>
<div style="position:absolute;left:742.5px;top:625px;width:5px;height:1px;background:#8f8c8c"></div>
<div style="position:absolute;left:751.5px;top:625px;width:78px;height:1px;background:#bdbdbd"></div>
<div style="position:absolute;left:790px;top:622.5px;width:1px;height:6px;background:#9a9a9a"></div>
<div style="position:absolute;left:778px;top:620.5px;width:4px;height:9px;background:#d8d8d8;border-radius:1px"></div>
<svg style="left:833.5px;top:622px" width="7" height="7" viewBox="0 0 7 7" stroke="#a09d9d" stroke-width="0.9"><path d="M3.5 0 V7 M0 3.5 H7"/></svg>
<div class="st" style="left:849.5px;top:622.5px;font-size:7.6px">73%</div>
<svg style="left:874.5px;top:618.5px" width="13" height="13" viewBox="0 0 13 13" fill="none" stroke="#e0e0e0" stroke-width="0.9"><rect x="3.5" y="3.5" width="6" height="6"/><path d="M6.5 0 L5 1.5 M6.5 0 L8 1.5 M6.5 13 L5 11.5 M6.5 13 L8 11.5 M0 6.5 L1.5 5 M0 6.5 L1.5 8 M13 6.5 L11.5 5 M13 6.5 L11.5 8"/></svg>
<!-- ppt logo -->
<svg style="left:9.5px;top:11.8px" width="13" height="13" viewBox="0 0 15 15">
<circle cx="8" cy="7.5" r="7" fill="#e8572f"/>
<path d="M8 0.5 A7 7 0 0 1 15 7.5 L8 7.5Z" fill="#f7a35c"/>
<path d="M8 7.5 L15 7.5 A7 7 0 0 1 8 14.5Z" fill="#d9452b"/>
<rect x="1.5" y="4" width="7" height="7" rx="1" fill="#c4262e"/>
<text x="3" y="10" font-size="6.5" font-weight="bold" fill="#fff" font-family="Liberation Sans">P</text>
</svg>
<div class="a" style="left:35.8px;top:13.5px;font-size:9.2px;color:#ebe9e8;transform:scaleX(0.83);transform-origin:0 0">AutoSave</div>
<div style="position:absolute;left:75px;top:10px;width:34px;height:16px;border:1px solid #bdb9b7;border-radius:8px"></div>
<div style="position:absolute;left:77.5px;top:12.5px;width:11px;height:11px;background:#fff;border-radius:50%"></div>
<div class="a" style="left:93px;top:13.5px;font-size:9.2px;color:#ebe9e8;transform:scaleX(0.88);transform-origin:0 0">Off</div>
<!-- save -->
<svg style="left:119px;top:12px" width="13" height="13" viewBox="0 0 13 13" fill="none" stroke="#e6e4e3" stroke-width="1.1">
<path d="M0.6 0.6 H10.5 L12.4 2.5 V12.4 H0.6Z"/><path d="M3 0.6 V4.5 H9.5 V0.6"/><path d="M2.8 12.4 V7.5 H10.2 V12.4"/>
</svg>
<!-- undo -->
<svg style="left:141px;top:12px" width="13" height="13" viewBox="0 0 13 13" fill="none" stroke="#8c8886" stroke-width="1.1">
<path d="M1 5 H8 A4 4 0 0 1 8 12.5 H5"/><path d="M4 2 L1 5 L4 8"/>
</svg>
<div class="chev" style="left:159px;top:15.5px;border-color:#8c8886;width:3.5px;height:3.5px"></div>
<!-- redo -->
<svg style="left:171px;top:12px" width="13" height="13" viewBox="0 0 13 13" fill="none" stroke="#8c8886" stroke-width="1.1">
<path d="M10.5 3.2 A5.6 5.6 0 1 1 6.5 0.9"/><path d="M9.5 0.5 V3.8 H12.6"/>
</svg>
<!-- present -->
<svg style="left:193px;top:12px" width="12" height="12" viewBox="0 0 12 12" fill="none" stroke="#e6e4e3" stroke-width="1.1">
<path d="M0 0.6 H12"/><path d="M1 0.6 V7.5 H11 V0.6"/><path d="M6 7.5 V11.4"/><path d="M3 11.4 H9"/><path d="M4.8 2.5 L7.8 4.2 L4.8 5.9Z" fill="#e6e4e3" stroke-width="0.6"/>
</svg>
<!-- customize -->
<svg style="left:218px;top:15.5px" width="6" height="6" viewBox="0 0 6 6" fill="none" stroke="#d6d4d3" stroke-width="1">
<path d="M0 0.5 H6"/><path d="M0.5 2.5 L3 5 L5.5 2.5"/>
</svg>
<div class="a" style="left:243px;top:14px;font-size:9.15px;color:#ebe9e8">3- hazards presentation...</div>
<div style="position:absolute;left:356.5px;top:17.5px;width:2.5px;height:2.5px;border-radius:50%;background:#ebe9e8"></div>
<div class="a" style="left:365px;top:14px;font-size:8.8px;color:#ebe9e8">Saved to this PC</div>
<svg style="left:434px;top:15.5px" width="8" height="5" viewBox="0 0 8 5" fill="none" stroke="#ebe9e8" stroke-width="1"><path d="M0.5 0.5 L4 4 L7.5 0.5"/></svg>
<!-- search -->
<div style="position:absolute;left:467px;top:6px;width:243px;height:25px;background:#bfbebe;border-radius:4px;border-bottom:1px solid #8e8c8b"></div>
<svg style="left:478px;top:12.5px" width="11" height="11" viewBox="0 0 11 11" fill="none" stroke="#3c3c3c" stroke-width="1"><circle cx="6.8" cy="4.2" r="3.5"/><path d="M4.3 6.7 L0.6 10.4"/></svg>
<div class="a" style="left:500px;top:13.5px;font-size:9.9px;color:#555">Search</div>
<!-- warning -->
<svg style="left:739px;top:12px" width="13" height="12" viewBox="0 0 13 12"><path d="M6.5 0.5 L12.7 11.5 H0.3Z" fill="#f2b62a"/><rect x="6" y="3.8" width="1.1" height="4.5" fill="#3a2a00"/><rect x="6" y="9.2" width="1.1" height="1.1" fill="#3a2a00"/></svg>
<!-- avatar -->
<div style="position:absolute;left:759.5px;top:9px;width:18.5px;height:18.5px;border-radius:50%;background:#e8e0de;overflow:hidden">
<div style="position:absolute;left:4.5px;top:3px;width:9px;height:11px;border-radius:45%;background:#d8aaa0"></div>
<div style="position:absolute;left:3.5px;top:2px;width:11px;height:4px;border-radius:50% 50% 0 0;background:#c8c0c0"></div>
<div style="position:absolute;left:2px;top:14px;width:15px;height:8px;border-radius:40% 40% 0 0;background:#5a5060"></div>
<div style="position:absolute;left:7.5px;top:14px;width:3px;height:5px;background:#fff"></div>
</div>
<!-- window controls -->
<div style="position:absolute;left:801px;top:18px;width:10px;height:1px;background:#f0f0f0"></div>
<div style="position:absolute;left:839px;top:13.5px;width:10px;height:10px;border:1px solid #f0f0f0;border-radius:1.5px"></div>
<svg style="left:876px;top:13px" width="10" height="10" viewBox="0 0 10 10" stroke="#f0f0f0" stroke-width="1.1"><path d="M0.3 0.3 L9.7 9.7 M9.7 0.3 L0.3 9.7"/></svg>
<!-- tabs -->
<div class="tab" style="left:14px">File</div>
<div class="tab" style="left:50px;font-size:10.4px;color:#fff;-webkit-text-stroke:0.35px #fff;transform:scaleX(0.96);transform-origin:0 0">Home</div>
<div style="position:absolute;left:50px;top:57px;width:31px;height:2.5px;background:#e6a4a0;border-radius:1px"></div>
<div class="tab" style="left:94.5px">Insert</div>
<div class="tab" style="left:137px">Draw</div>
<div class="tab" style="left:176px">Design</div>
<div class="tab" style="left:223px">Transitions</div>
<div class="tab" style="left:289px">Animations</div>
<div class="tab" style="left:358px">Slide Show</div>
<div class="tab" style="left:424.5px">Record</div>
<div class="tab" style="left:473.5px">Review</div>
<div class="tab" style="left:523px">View</div>
<div class="tab" style="left:560.5px">Help</div>
<div class="tab" style="left:598px">EndNote X8</div>
<div class="tab" style="left:669px">Acrobat</div>
<div class="tab" style="left:722.5px">PDFelement</div>
<!-- right buttons -->
<div style="position:absolute;left:791.5px;top:40px;width:18px;height:18px;background:#bdbcbc;border-radius:3px"></div>
<svg style="left:795.5px;top:44px" width="10" height="10" viewBox="0 0 10 10"><circle cx="5" cy="5" r="4.3" fill="none" stroke="#222" stroke-width="1"/><circle cx="5" cy="5" r="2.5" fill="#222"/></svg>
<div style="position:absolute;left:816.5px;top:40px;width:18px;height:18px;background:#bdbcbc;border-radius:3px"></div>
<svg style="left:820px;top:44px" width="11" height="10" viewBox="0 0 11 10"><rect x="0.5" y="3" width="6" height="6.5" fill="#333"/><circle cx="2.5" cy="1.5" r="1.4" fill="#333"/><circle cx="6.5" cy="1.5" r="1.4" fill="#333"/><rect x="5" y="4" width="5.5" height="5.5" fill="none" stroke="#333" stroke-width="0.9"/></svg>
<div style="position:absolute;left:841px;top:40px;width:18px;height:18px;background:#bdbcbc;border-radius:3px"></div>
<svg style="left:845px;top:44.5px" width="10" height="10" viewBox="0 0 10 10" fill="none" stroke="#333" stroke-width="0.9"><path d="M0.5 0.5 H9.5 V6.5 H4 L1.8 9 V6.5 H0.5Z"/></svg>
<div style="position:absolute;left:866px;top:40px;width:24px;height:18px;background:#e58c66;border-radius:3px"></div>
<svg style="left:869px;top:44px" width="18" height="11" viewBox="0 0 18 11" fill="none" stroke="#3a2a22" stroke-width="0.9"><path d="M0.5 4.5 V10.5 H9.5 V7"/><path d="M3 8 C3.5 5 6 3.5 9 3.5 V1 L12 4 L9 7 V5.5 C6.5 5.5 4.5 6.5 3 8Z"/><path d="M13.5 4.5 L15 6 L16.5 4.5"/></svg>

<div id="ribbon"></div>
<!-- separators -->
<div class="sep" style="left:90px"></div>
<div class="sep" style="left:133.5px"></div>
<div class="sep" style="left:304px"></div>
<div class="sep" style="left:463.5px"></div>
<div class="sep" style="left:512.5px"></div>
<div class="sep" style="left:556.5px"></div>
<div class="sep" style="left:617.5px"></div>
<div class="sep" style="left:663px"></div>
<div class="sep" style="left:721.5px"></div>
<div class="sep" style="left:769.5px"></div>
<div class="sep" style="left:858px"></div>
<!-- Clipboard -->
<svg style="left:20px;top:66px" width="23" height="26" viewBox="0 0 23 26">
<defs><linearGradient id="pg" x1="0" y1="0" x2="0" y2="1"><stop offset="0" stop-color="#f4e4cc"/><stop offset="1" stop-color="#f2cfa8"/></linearGradient></defs>
<rect x="1.3" y="4" width="15.7" height="18.5" fill="url(#pg)" stroke="#c59548" stroke-width="1.2"/>
<path d="M4.5 7 V4 H7.5 C7.8 1.5 10.5 1.5 10.8 4 H13.8 V7Z" fill="#e4e4e4" stroke="#777" stroke-width="0.9"/>
<rect x="11" y="10.5" width="10.8" height="14" fill="#dedede" stroke="#707070" stroke-width="1.2"/>
</svg>
<div class="rl" style="left:19px;top:95.5px;font-size:9.3px">Paste</div>
<svg style="left:26.5px;top:109px" width="5" height="3" viewBox="0 0 5 3" fill="none" stroke="#555" stroke-width="0.9"><path d="M0.3 0.3 L2.5 2.5 L4.7 0.3"/></svg>
<svg style="left:51.5px;top:66.5px" width="9" height="13" viewBox="0 0 9 13" fill="none">
<path d="M1.5 0.5 L6 8.5 M7.5 0.5 L3 8.5" stroke="#555" stroke-width="0.9"/>
<circle cx="2.2" cy="10.5" r="1.8" stroke="#3b79b9" stroke-width="1"/><circle cx="6.8" cy="10.5" r="1.8" stroke="#3b79b9" stroke-width="1"/>
</svg>
<svg style="left:50px;top:86px" width="13" height="13" viewBox="0 0 13 13" fill="#e4e4e4" stroke="#6a6a6a" stroke-width="0.9">
<rect x="0.5" y="0.5" width="4.5" height="10"/><path d="M5.5 3 H9.5 L12.5 6 V12.5 H5.5Z"/><path d="M7.5 8 H10.5 M7.5 10 H10.5" stroke-width="0.8"/>
</svg>
<svg style="left:72.5px;top:91px" width="5" height="3" viewBox="0 0 5 3" fill="none" stroke="#555" stroke-width="0.9"><path d="M0.3 0.3 L2.5 2.5 L4.7 0.3"/></svg>
<svg style="left:50px;top:105.5px" width="13" height="13" viewBox="0 0 13 13">
<path d="M8 5.5 L12 1" stroke="#666" stroke-width="1.4"/>
<path d="M0.8 8 L6 4.5 L9 8 L5 12.5Z" fill="#f0dcc0" stroke="#555" stroke-width="0.8"/>
<path d="M3 10 L6 8.5 L5 12.5Z" fill="#d4a62a"/>
</svg>
<div class="gl" style="left:24px;top:126px">Clipboard</div>
<svg style="left:81px;top:127.5px" width="6" height="6" viewBox="0 0 6 6" fill="none" stroke="#555" stroke-width="0.8"><path d="M0.4 5.6 V0.4 H5.6"/><path d="M2 2 L5.6 5.6 M5.6 3 V5.6 H3"/></svg>
<!-- Slides -->
<svg style="left:100.5px;top:68px" width="23" height="19" viewBox="0 0 23 19">
<rect x="0.6" y="0.6" width="21.8" height="17.8" fill="#dedede" stroke="#6a6a6a" stroke-width="1.2"/>
<rect x="2.5" y="2.5" width="18" height="14" fill="#e8e8e8" stroke="#555" stroke-width="1"/>
<path d="M2.5 6.2 H20.5 M11.5 6.2 V16.5" stroke="#555" stroke-width="1"/>
</svg>
<div class="rl" style="left:100px;top:93.5px;font-size:9.3px">Slides</div>
<svg style="left:108.5px;top:107px" width="5" height="3" viewBox="0 0 5 3" fill="none" stroke="#555" stroke-width="0.9"><path d="M0.3 0.3 L2.5 2.5 L4.7 0.3"/></svg>

<!-- Font group -->
<div style="position:absolute;left:140px;top:63.5px;width:120px;height:18px;background:#b9b9b9;border:1px solid #a9a9a9;border-radius:3px"></div>
<div style="position:absolute;left:262px;top:63.5px;width:36px;height:18px;background:#b9b9b9;border:1px solid #a9a9a9;border-radius:3px"></div>
<svg style="left:253.5px;top:71px" width="5" height="3" viewBox="0 0 5 3" fill="none" stroke="#555" stroke-width="0.9"><path d="M0.3 0.3 L2.5 2.5 L4.7 0.3"/></svg>
<svg style="left:290.5px;top:71px" width="5" height="3" viewBox="0 0 5 3" fill="none" stroke="#555" stroke-width="0.9"><path d="M0.3 0.3 L2.5 2.5 L4.7 0.3"/></svg>
<div class="a" style="left:146px;top:87px;font-size:10.3px;font-weight:bold;color:#7d7d7d">B</div>
<div class="a" style="left:166px;top:87px;font-size:10.3px;font-style:italic;font-family:'Liberation Serif';color:#7d7d7d">I</div>
<div class="a" style="left:185px;top:87px;font-size:10.3px;color:#7d7d7d;text-decoration:underline">U</div>
<div class="a" style="left:205px;top:87px;font-size:10.3px;color:#7d7d7d">S</div>
<div class="a" style="left:223px;top:89px;font-size:9.5px;color:#7d7d7d;letter-spacing:-0.5px">ab</div>
<div style="position:absolute;left:222.5px;top:93.5px;width:12.5px;height:1px;background:#7d7d7d"></div>
<div class="a" style="left:242.5px;top:86px;font-size:10px;color:#7d7d7d;letter-spacing:-1px">AV</div>
<div style="position:absolute;left:243px;top:95.5px;width:11px;height:0;border-top:1px dotted #8a8a8a"></div>
<svg style="left:259.5px;top:91px" width="5" height="3" viewBox="0 0 5 3" fill="none" stroke="#666" stroke-width="0.9"><path d="M0.3 0.3 L2.5 2.5 L4.7 0.3"/></svg>
<!-- row3 -->
<svg style="left:143px;top:105.5px" width="13" height="14" viewBox="0 0 13 14">
<path d="M2 9.5 L8.5 2.5 A1.6 1.6 0 0 1 11 4.8 L4.3 11 L1.5 11.5Z" fill="#e2e2e2" stroke="#7a7a7a" stroke-width="0.9"/>
<rect x="0" y="11" width="12.5" height="2.6" fill="#6e6e6e"/>
</svg>
<svg style="left:161.5px;top:111.5px" width="5" height="3" viewBox="0 0 5 3" fill="none" stroke="#666" stroke-width="0.9"><path d="M0.3 0.3 L2.5 2.5 L4.7 0.3"/></svg>
<svg style="left:175px;top:105.5px" width="12" height="14" viewBox="0 0 12 14">
<path d="M2.5 9.5 L6 0.8 L9.5 9.5 M3.8 6.5 H8.2" fill="none" stroke="#7a7a7a" stroke-width="1"/>
<rect x="0" y="10.8" width="12" height="2.8" fill="#6e6e6e"/>
</svg>
<svg style="left:193.5px;top:111.5px" width="5" height="3" viewBox="0 0 5 3" fill="none" stroke="#666" stroke-width="0.9"><path d="M0.3 0.3 L2.5 2.5 L4.7 0.3"/></svg>
<div class="a" style="left:206px;top:108px;font-size:9px;color:#7d7d7d">Aa</div>
<svg style="left:224px;top:111.5px" width="5" height="3" viewBox="0 0 5 3" fill="none" stroke="#666" stroke-width="0.9"><path d="M0.3 0.3 L2.5 2.5 L4.7 0.3"/></svg>
<div style="position:absolute;left:236.5px;top:104px;width:1px;height:17px;background:#a9a9a9"></div>
<svg style="left:241px;top:105.5px" width="13" height="11" viewBox="0 0 13 11" fill="none" stroke="#7a7a7a" stroke-width="0.9">
<path d="M0.8 10.7 L4.8 0.5 L8.8 10.7 M2.4 7 H7.2"/><path d="M9.8 3 L11 1.8 L12.2 3" stroke-width="0.7"/>
</svg>
<svg style="left:262.5px;top:108.5px" width="10" height="8" viewBox="0 0 10 8" fill="none" stroke="#7a7a7a" stroke-width="0.9">
<path d="M0.5 7.7 L3.5 0.3 L6.5 7.7 M1.7 5 H5.3"/><path d="M7.3 1 L8.3 2 L9.3 1" stroke-width="0.7"/>
</svg>
<div style="position:absolute;left:277px;top:104px;width:1px;height:17px;background:#a9a9a9"></div>
<svg style="left:282.5px;top:105.5px" width="13" height="13" viewBox="0 0 13 13">
<path d="M0.8 10.7 L4.8 0.5 L8.8 10.7 M2.4 7 H7.2" fill="none" stroke="#7a7a7a" stroke-width="0.9"/>
<path d="M7 10 L10 7 L12.5 9.5 L9.5 12.5Z" fill="#e0e0e0" stroke="#8a8a8a" stroke-width="0.8"/>
</svg>
<div class="gl" style="left:204px;top:126.5px">Font</div>
<svg style="left:297px;top:127.5px" width="6" height="6" viewBox="0 0 6 6" fill="none" stroke="#555" stroke-width="0.8"><path d="M0.4 5.6 V0.4 H5.6"/><path d="M2 2 L5.6 5.6 M5.6 3 V5.6 H3"/></svg>

<!-- Paragraph group -->
<svg style="left:313px;top:66px" width="14" height="12" viewBox="0 0 14 12" stroke="#7a7a7a" stroke-width="1.1">
<path d="M4.5 1.3 H12.5 M4.5 6.2 H12.5 M4.5 10.9 H12.5"/><path d="M1 1.3 H2.5 M1 6.2 H2.5 M1 10.9 H2.5" stroke="#8a8a8a" stroke-width="1.5"/>
</svg>
<svg style="left:332px;top:71px" width="5" height="3" viewBox="0 0 5 3" fill="none" stroke="#666" stroke-width="0.9"><path d="M0.3 0.3 L2.5 2.5 L4.7 0.3"/></svg>
<svg style="left:345px;top:66px" width="13" height="12" viewBox="0 0 13 12" stroke="#7a7a7a" stroke-width="1.1">
<path d="M4.5 1.3 H12.2 M4.5 6.2 H12.2 M4.5 10.9 H12.2"/><path d="M1.5 0 V2.5 M1.5 4.8 V7.5 M1.5 9.5 V12" stroke="#999" stroke-width="0.8"/>
</svg>
<svg style="left:364px;top:71px" width="5" height="3" viewBox="0 0 5 3" fill="none" stroke="#666" stroke-width="0.9"><path d="M0.3 0.3 L2.5 2.5 L4.7 0.3"/></svg>
<div style="position:absolute;left:374.5px;top:63px;width:1px;height:18.5px;background:#a5a5a5"></div>
<svg style="left:379.5px;top:66px" width="13" height="12" viewBox="0 0 13 12" stroke="#7a7a7a" stroke-width="1.1">
<path d="M5.3 1 H12.5 M5.3 4.3 H12.5 M5.3 7.6 H12.5 M5.3 10.9 H12.5"/><path d="M1.8 0.5 V11.5 M0.5 2 L1.8 0.5 L3.1 2 M0.5 10 L1.8 11.5 L3.1 10" stroke="#9a9a9a" stroke-width="0.8" fill="none"/>
</svg>
<svg style="left:396.5px;top:71px" width="5" height="3" viewBox="0 0 5 3" fill="none" stroke="#666" stroke-width="0.9"><path d="M0.3 0.3 L2.5 2.5 L4.7 0.3"/></svg>
<svg style="left:431px;top:66px" width="11" height="13" viewBox="0 0 11 13" fill="none" stroke="#7a7a7a" stroke-width="0.9">
<path d="M2.5 0 V12.3 M0.5 10 L2.5 12.3 L4.5 10"/><path d="M7.8 5 V12.3 M5.8 10 L7.8 12.3 L9.8 10"/><path d="M6.3 4.5 L7.8 0.5 L9.3 4.5" stroke="#a5a5a5" stroke-width="0.7"/>
</svg>
<svg style="left:446.5px;top:71px" width="5" height="3" viewBox="0 0 5 3" fill="none" stroke="#666" stroke-width="0.9"><path d="M0.3 0.3 L2.5 2.5 L4.7 0.3"/></svg>
<!-- row2 -->
<svg style="left:314px;top:86.5px" width="12" height="11" viewBox="0 0 12 11" stroke="#7a7a7a" stroke-width="1.1" fill="none">
<path d="M0.5 0.8 H11.5 M6 4.2 H11.5 M6 7.1 H11.5 M0.5 10.3 H11.5"/><path d="M4.5 5.7 H1 M2.5 4.2 L1 5.7 L2.5 7.2" stroke="#9a9a9a" stroke-width="0.8"/>
</svg>
<svg style="left:334px;top:86.5px" width="12" height="11" viewBox="0 0 12 11" stroke="#7a7a7a" stroke-width="1.1" fill="none">
<path d="M0.5 0.8 H11.5 M6 4.2 H11.5 M6 7.1 H11.5 M0.5 10.3 H11.5"/><path d="M0.8 5.7 H4.3 M2.8 4.2 L4.3 5.7 L2.8 7.2" stroke="#9a9a9a" stroke-width="0.8"/>
</svg>
<div style="position:absolute;left:350.5px;top:83px;width:1px;height:18.5px;background:#a5a5a5"></div>
<div class="a" style="left:357px;top:89px;font-size:8px;color:#7d7d7d">&gt;</div>
<div class="a" style="left:361px;top:88.5px;font-size:9px;font-weight:bold;color:#7d7d7d">¶</div>
<div class="a" style="left:377px;top:88.5px;font-size:9px;font-weight:bold;color:#7d7d7d">¶</div>
<div class="a" style="left:382.5px;top:89px;font-size:8px;color:#7d7d7d">&lt;</div>
<div style="position:absolute;left:392.5px;top:83px;width:1px;height:18.5px;background:#a5a5a5"></div>
<svg style="left:398px;top:88.5px" width="16" height="7" viewBox="0 0 16 7" stroke="#a8a8a8" stroke-width="0.9">
<path d="M0.5 0.8 H4.5 M6 0.8 H10 M11.5 0.8 H15.5 M0.5 3.5 H4.5 M6 3.5 H10 M0.5 6.2 H4.5 M6 6.2 H10"/>
</svg>
<svg style="left:414.5px;top:91px" width="5" height="3" viewBox="0 0 5 3" fill="none" stroke="#666" stroke-width="0.9"><path d="M0.3 0.3 L2.5 2.5 L4.7 0.3"/></svg>
<svg style="left:429.5px;top:86px" width="13" height="12" viewBox="0 0 13 12">
<rect x="0.6" y="1.6" width="11.8" height="8.8" fill="#e6e6e6" stroke="#8a8a8a" stroke-width="0.9"/>
<path d="M6.5 0 V12 M3 6 H10" stroke="#7a7a7a" stroke-width="0.9"/>
</svg>
<svg style="left:446.5px;top:91px" width="5" height="3" viewBox="0 0 5 3" fill="none" stroke="#666" stroke-width="0.9"><path d="M0.3 0.3 L2.5 2.5 L4.7 0.3"/></svg>
<!-- row3 -->
<svg style="left:314px;top:106.5px" width="12" height="11" viewBox="0 0 12 11" stroke="#7a7a7a" stroke-width="1.1">
<path d="M0.2 0.8 H11.5 M0.2 3.8 H8 M0.2 6.9 H11.5 M0.2 10 H8"/>
</svg>
<svg style="left:334px;top:106.5px" width="12" height="11" viewBox="0 0 12 11" stroke="#7a7a7a" stroke-width="1.1">
<path d="M0.2 0.8 H11.5 M2 3.8 H9.5 M0.2 6.9 H11.5 M2 10 H9.5"/>
</svg>
<svg style="left:354px;top:106.5px" width="12" height="11" viewBox="0 0 12 11" stroke="#7a7a7a" stroke-width="1.1">
<path d="M0.2 0.8 H11.5 M3.5 3.8 H11.5 M0.2 6.9 H11.5 M3.5 10 H11.5"/>
</svg>
<svg style="left:374px;top:106.5px" width="12" height="11" viewBox="0 0 12 11" stroke="#7a7a7a" stroke-width="1.1">
<path d="M0.2 0.8 H11 M0.2 3.8 H11 M0.2 6.9 H11 M0.2 10 H11"/>
</svg>
<svg style="left:391px;top:111.5px" width="5" height="3" viewBox="0 0 5 3" fill="none" stroke="#666" stroke-width="0.9"><path d="M0.3 0.3 L2.5 2.5 L4.7 0.3"/></svg>
<svg style="left:430px;top:107px" width="13" height="11" viewBox="0 0 13 11" fill="none" stroke="#8a8a8a" stroke-width="0.9">
<path d="M0.5 1.5 C3 0 7 0 9 2.5 L12 5 V10.5 H4.5 V6"/><path d="M0.5 4 L4 2" /><rect x="4.5" y="6" width="7.5" height="4.5" fill="#e2e2e2"/>
</svg>
<svg style="left:446.5px;top:111.5px" width="5" height="3" viewBox="0 0 5 3" fill="none" stroke="#666" stroke-width="0.9"><path d="M0.3 0.3 L2.5 2.5 L4.7 0.3"/></svg>
<div class="gl" style="left:358px;top:126.5px">Paragraph</div>
<svg style="left:455px;top:127.5px" width="6" height="6" viewBox="0 0 6 6" fill="none" stroke="#555" stroke-width="0.8"><path d="M0.4 5.6 V0.4 H5.6"/><path d="M2 2 L5.6 5.6 M5.6 3 V5.6 H3"/></svg>

<!-- Drawing -->
<svg style="left:476.5px;top:65.5px" width="24" height="23" viewBox="0 0 24 23">
<defs><linearGradient id="dg" x1="0" y1="0" x2="1" y2="1"><stop offset="0" stop-color="#e8e8e8"/><stop offset="1" stop-color="#d4d4d4"/></linearGradient></defs>
<rect x="0.8" y="0.8" width="16.5" height="16" fill="url(#dg)" stroke="#6a6a6a" stroke-width="1.2"/>
<path d="M10.3 22 L16 6 L21.7 22 M12.3 16.5 H19.7" fill="none" stroke="#2f68a8" stroke-width="1.4"/>
</svg>
<div class="rl" style="left:471px;top:94px;font-size:9.3px">Drawing</div>
<svg style="left:485.5px;top:107.5px" width="5" height="3" viewBox="0 0 5 3" fill="none" stroke="#555" stroke-width="0.9"><path d="M0.3 0.3 L2.5 2.5 L4.7 0.3"/></svg>
<!-- Editing -->
<svg style="left:522px;top:65px" width="25" height="24" viewBox="0 0 25 24">
<circle cx="15" cy="9" r="7.8" fill="#dedede" stroke="#5a5a5a" stroke-width="1.1"/>
<path d="M9.5 14.5 L1 23.2" stroke="#5a5a5a" stroke-width="1.1"/>
</svg>
<div class="rl" style="left:520px;top:94px;font-size:9.4px">Editing</div>
<svg style="left:531px;top:107.5px" width="5" height="3" viewBox="0 0 5 3" fill="none" stroke="#555" stroke-width="0.9"><path d="M0.3 0.3 L2.5 2.5 L4.7 0.3"/></svg>
<!-- Create PDF -->
<svg style="left:580px;top:68.5px" width="21" height="22" viewBox="0 0 21 22" fill="none" stroke="#5b68c4" stroke-width="1">
<path d="M9 17.5 H0.6 V0.6 H10.5 L14.5 4.6 V9"/>
<path d="M7 4.5 V9.5 M7 9.5 L3.5 12 M7 9.5 L11 11.5" stroke-width="0.8"/>
<path d="M11.5 15 L16 10.5 A2 2 0 0 1 19 13.5 L16.5 16" stroke-width="1.2"/>
<path d="M15 15.5 L10.5 20 A2 2 0 0 1 7.5 17 L10 14.5" stroke-width="1.2"/>
</svg>
<div class="rl" style="left:573px;top:95px;font-size:9px">Create</div>
<div class="rl" style="left:575.5px;top:107.5px;font-size:8.3px">a PDF</div>
<div class="gl" style="left:559px;top:127px;font-size:8.4px">Adobe Acrobat</div>
<!-- Dictate -->
<svg style="left:633px;top:65.5px" width="16" height="25" viewBox="0 0 16 25" fill="none">
<rect x="3" y="0.6" width="9.6" height="17.5" rx="4.8" fill="#aed4f2" stroke="#555" stroke-width="1.1"/>
<path d="M0.6 13.5 A7.2 7.2 0 0 0 15 13.5" stroke="#555" stroke-width="1.1"/>
<path d="M7.8 20.5 V24.2" stroke="#555" stroke-width="1.3"/>
</svg>
<div class="rl" style="left:627px;top:96px;font-size:9.3px">Dictate</div>
<svg style="left:638.5px;top:110px" width="5" height="3" viewBox="0 0 5 3" fill="none" stroke="#555" stroke-width="0.9"><path d="M0.3 0.3 L2.5 2.5 L4.7 0.3"/></svg>
<div class="gl" style="left:630px;top:127px;font-size:8px">Voice</div>
<!-- Sensitivity -->
<svg style="left:684px;top:66.5px" width="22" height="22" viewBox="0 0 22 22">
<rect x="0.5" y="1" width="16" height="20.5" fill="#dadada"/>
<path d="M3 15 L10 8 L13.5 11.5 L6.5 18.5Z" fill="#d0d0d0" stroke="#9a9a9a" stroke-width="0.8"/>
<path d="M4.8 15.2 L10 10 M6 16.5 L11.2 11.2" stroke="#aaa" stroke-width="0.6"/>
<path d="M10.5 7 L14 3.5 L17.5 7 L14 10.5Z" fill="#e6e6e6" stroke="#bbb" stroke-width="0.6"/>
<rect x="16" y="1" width="4" height="4" fill="#e6e6e6" transform="rotate(45 18 3)"/>
</svg>
<div class="rl" style="left:673px;top:95.5px;font-size:8.95px;color:#8c8c8c">Sensitivity</div>
<svg style="left:690px;top:108.5px" width="5" height="3" viewBox="0 0 5 3" fill="none" stroke="#888" stroke-width="0.9"><path d="M0.3 0.3 L2.5 2.5 L4.7 0.3"/></svg>
<div class="gl" style="left:674.5px;top:127px;font-size:8.3px">Sensitivity</div>
<!-- Add-ins -->
<svg style="left:734.5px;top:66.5px" width="23" height="23" viewBox="0 0 23 23">
<rect x="0.8" y="0.8" width="21.4" height="21.4" fill="#e7a9a0" stroke="#a9524a" stroke-width="1.2"/>
<rect x="3.3" y="3.3" width="6.6" height="6.6" fill="#c8c4c0" stroke="#8a4a44" stroke-width="1"/>
<rect x="13.1" y="3.3" width="6.6" height="6.6" fill="#c8c4c0" stroke="#8a4a44" stroke-width="1"/>
<rect x="3.3" y="13.1" width="6.6" height="6.6" fill="#c8c4c0" stroke="#8a4a44" stroke-width="1"/>
<rect x="13.1" y="13.1" width="6.6" height="6.6" fill="#c8c4c0" stroke="#8a4a44" stroke-width="1"/>
</svg>
<div class="rl" style="left:729.5px;top:95.5px;font-size:9.6px">Add-ins</div>
<div class="gl" style="left:730px;top:127px;font-size:8.5px">Add-ins</div>
<!-- Designer -->
<svg style="left:783.5px;top:65.5px" width="25" height="22" viewBox="0 0 25 22">
<rect x="2" y="4" width="22" height="17" fill="#e6e6e6" stroke="#707070" stroke-width="1.3"/>
<rect x="4" y="6" width="18" height="13" fill="#ececec" stroke="#8a8a8a" stroke-width="0.8"/>
<path d="M4 9 H22 M18 9 V19" stroke="#666" stroke-width="1"/>
<path d="M5 0.3 H10.5 L7.8 5.5 H10.5 L2.5 14.5 L5 7.5 H1.5Z" fill="#f2c232" stroke="#7a5a10" stroke-width="0.6"/>
</svg>
<div class="rl" style="left:778.5px;top:95.5px;font-size:9px">Designer</div>
<!-- Copilot -->
<svg style="left:823.5px;top:67px" width="23" height="22" viewBox="0 0 23 22">
<defs>
<linearGradient id="cp1" x1="0.3" y1="0" x2="0" y2="1"><stop offset="0" stop-color="#1e9ee8"/><stop offset="0.5" stop-color="#3cc868"/><stop offset="1" stop-color="#f4c21e"/></linearGradient>
<linearGradient id="cp2" x1="0.7" y1="0" x2="0.3" y2="1"><stop offset="0" stop-color="#8a4ae0"/><stop offset="0.5" stop-color="#e24a9c"/><stop offset="1" stop-color="#f47a3a"/></linearGradient>
</defs>
<path d="M7 0.8 H14.5 C13 1 12 2 11.3 4 L7.5 16.5 C6.8 19 5.5 20.5 3.5 20.5 C1.3 20.5 0.3 19 0.6 16.5 L2 8 C2.8 3 4.3 0.8 7 0.8Z" fill="url(#cp1)"/>
<path d="M16 21.2 H8.5 C10 21 11 20 11.7 18 L15.5 5.5 C16.2 3 17.5 1.5 19.5 1.5 C21.7 1.5 22.7 3 22.4 5.5 L21 14 C20.2 19 18.7 21.2 16 21.2Z" fill="url(#cp2)"/>
<path d="M12 1 H16.5 C17.5 1 18.5 1.5 19.2 2.5 C17.5 2.5 16.5 3.5 15.8 5.5 L14.8 8.5 C14 6 13 3 12 1Z" fill="#1f50c8"/>
</svg>
<div class="rl" style="left:820px;top:95.5px;font-size:9.8px">Copilot</div>
<svg style="left:877.5px;top:126px" width="8" height="5" viewBox="0 0 8 5" fill="none" stroke="#444" stroke-width="1"><path d="M0.5 0.5 L4 4 L7.5 0.5"/></svg>

</body></html>
